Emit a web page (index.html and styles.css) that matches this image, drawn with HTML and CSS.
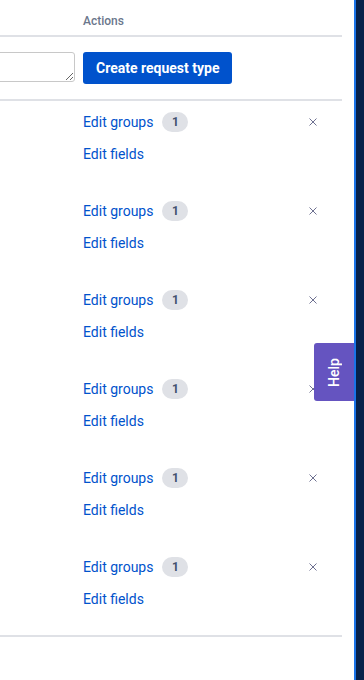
FILE: index.html
```html
<!DOCTYPE html>
<html lang="en">
<head>
<meta charset="utf-8">
<title>Request types</title>
<link rel="stylesheet" href="styles.css">
</head>
<body>
<div class="app">
  <main class="page">
    <div class="table">
      <div class="thead"><span class="th">Actions</span></div>
      <div class="form-row">
        <textarea class="name-input"></textarea>
        <button class="btn-primary" type="button">Create request type</button>
      </div>
      <div class="tbody">
        <div class="row">
          <div class="line"><a class="link" href="#">Edit groups</a><span class="badge">1</span><svg class="close" viewBox="0 0 8 8"><path d="M0.5 0.5L7.5 7.5M7.5 0.5L0.5 7.5"/></svg></div>
          <div class="line second"><a class="link" href="#">Edit fields</a></div>
        </div>
        <div class="row">
          <div class="line"><a class="link" href="#">Edit groups</a><span class="badge">1</span><svg class="close" viewBox="0 0 8 8"><path d="M0.5 0.5L7.5 7.5M7.5 0.5L0.5 7.5"/></svg></div>
          <div class="line second"><a class="link" href="#">Edit fields</a></div>
        </div>
        <div class="row">
          <div class="line"><a class="link" href="#">Edit groups</a><span class="badge">1</span><svg class="close" viewBox="0 0 8 8"><path d="M0.5 0.5L7.5 7.5M7.5 0.5L0.5 7.5"/></svg></div>
          <div class="line second"><a class="link" href="#">Edit fields</a></div>
        </div>
        <div class="row">
          <div class="line"><a class="link" href="#">Edit groups</a><span class="badge">1</span><svg class="close" viewBox="0 0 8 8"><path d="M0.5 0.5L7.5 7.5M7.5 0.5L0.5 7.5"/></svg></div>
          <div class="line second"><a class="link" href="#">Edit fields</a></div>
        </div>
        <div class="row">
          <div class="line"><a class="link" href="#">Edit groups</a><span class="badge">1</span><svg class="close" viewBox="0 0 8 8"><path d="M0.5 0.5L7.5 7.5M7.5 0.5L0.5 7.5"/></svg></div>
          <div class="line second"><a class="link" href="#">Edit fields</a></div>
        </div>
        <div class="row">
          <div class="line"><a class="link" href="#">Edit groups</a><span class="badge">1</span><svg class="close" viewBox="0 0 8 8"><path d="M0.5 0.5L7.5 7.5M7.5 0.5L0.5 7.5"/></svg></div>
          <div class="line second"><a class="link" href="#">Edit fields</a></div>
        </div>
      </div>
    </div>
  </main>
  <aside class="edge"></aside>
  <button class="help-tab" type="button"><span class="help-label">Help</span></button>
</div>
</body>
</html>
```

FILE: styles.css
```css
* { box-sizing: border-box; }
html, body { margin: 0; padding: 0; }
body {
  font-family: Roboto, "Noto Sans", "Liberation Sans", sans-serif;
  font-size: 14px;
  color: #172b4d;
  background: #fff;
  overflow: hidden;
}
.app {
  position: relative;
  display: flex;
  width: 364px;
  height: 680px;
}
.page {
  width: 354px;
  flex: none;
  background: #fff;
  overflow: hidden;
}
.edge {
  flex: 1;
  background: #07214a;
  border-left: 2px solid #1b74e8;
}
.table {
  width: 342px;
}
.thead {
  height: 37px;
  padding: 12px 0 0 83px;
  border-bottom: 2px solid #dfe1e6;
}
.th {
  display: block;
  font-size: 12px;
  line-height: 18px;
  font-weight: 500;
  color: #6b778c;
}
.form-row {
  height: 64px;
  display: flex;
  align-items: flex-start;
  gap: 8px;
  padding-top: 15px;
  border-bottom: 2px solid #dfe1e6;
}
.name-input {
  width: 120px;
  height: 30px;
  margin: 0 0 0 -45px;
  border: 1px solid #c8c8c8;
  border-radius: 3px;
  padding: 4px;
  resize: both;
  font: inherit;
  background: #fff;
}
.btn-primary {
  height: 32px;
  padding: 0 13px;
  border: none;
  border-radius: 3px;
  background: #0052cc;
  color: #fff;
  font-family: inherit;
  font-size: 14px;
  font-weight: 700;
  line-height: 32px;
  cursor: pointer;
}
.tbody {
  border-bottom: 2px solid #dfe1e6;
}
.row {
  height: 89px;
  padding: 11px 25px 0 83px;
}
.line {
  display: flex;
  align-items: center;
  height: 20px;
}
.line.second {
  margin-top: 12px;
}
.link {
  color: #0052cc;
  text-decoration: none;
  font-size: 14px;
  line-height: 20px;
}
.badge {
  margin-left: 9px;
  width: 26px;
  height: 20px;
  border-radius: 10px;
  background: #dfe1e6;
  color: #42526e;
  font-size: 12px;
  font-weight: 700;
  line-height: 20px;
  text-align: center;
}
.close {
  margin-left: auto;
  width: 8px;
  height: 8px;
  fill: none;
  stroke: #6e7191;
  stroke-width: 1;
}
.help-tab {
  position: absolute;
  top: 343px;
  left: 314px;
  width: 40px;
  height: 58px;
  padding: 0;
  border: none;
  border-radius: 3px 0 0 3px;
  background: #6554c0;
  color: #fff;
  font-family: inherit;
  display: flex;
  align-items: center;
  justify-content: center;
  cursor: pointer;
}
.help-label {
  writing-mode: vertical-rl;
  transform: rotate(180deg);
  font-size: 14px;
  font-weight: 500;
  line-height: 1;
}
```
